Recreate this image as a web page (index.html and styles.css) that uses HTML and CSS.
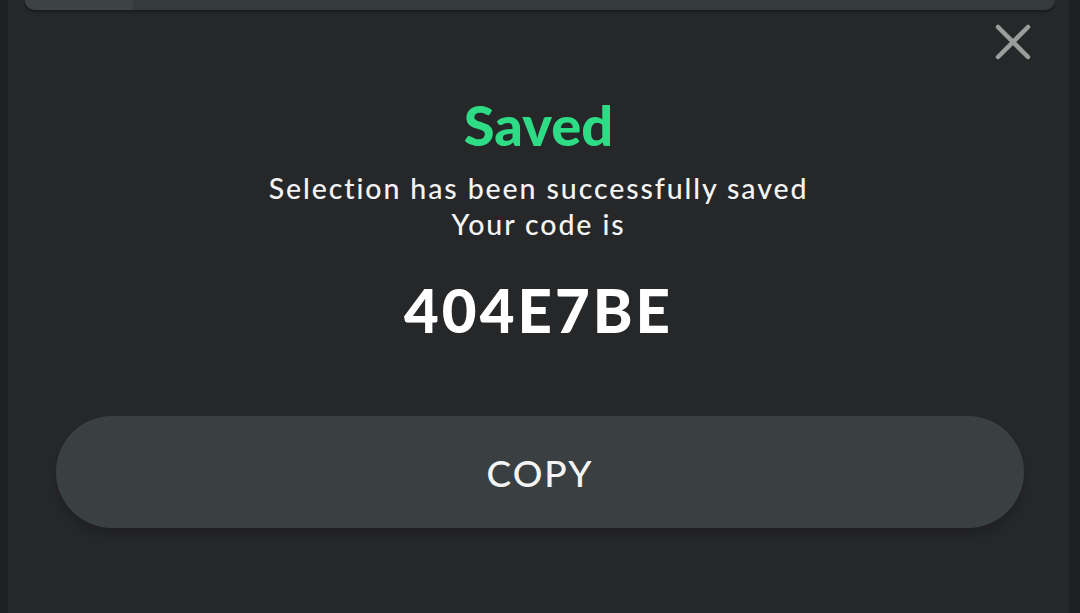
FILE: index.html
```html
<!DOCTYPE html>
<html>
<head>
<meta charset="utf-8">
<link rel="stylesheet" href="styles.css">
</head>
<body>
<div class="screen">
  <div class="sheet">
    <div class="topbar"><div class="topbar-seg"></div></div>
    <div class="close-row">
      <svg class="close" viewBox="0 0 36 36" width="36" height="36" aria-label="Close">
        <path d="M3 3 L33 33 M33 3 L3 33" stroke="#9b9c9c" stroke-width="4.5" stroke-linecap="round" fill="none"/>
      </svg>
    </div>
    <div class="content">
      <h1 class="title">Saved</h1>
      <p class="msg">Selection has been successfully saved<br>Your code is</p>
      <div class="code">404E7BE</div>
    </div>
    <div class="actions">
      <button class="copy">COPY</button>
    </div>
  </div>
</div>
</body>
</html>
```
FILE: styles.css
```css
html, body {
  margin: 0;
  padding: 0;
  background: #1f2021;
}
.screen {
  width: 1080px;
  height: 613px;
  overflow: hidden;
  background: #1f2021;
  display: flex;
}
.sheet {
  margin-left: 8px;
  width: 1061px;
  height: 613px;
  background: #262729;
  display: flex;
  flex-direction: column;
  font-family: Lato, "Noto Sans", sans-serif;
  color: #f4f4f4;
}
.topbar {
  margin: 0 14px 0 17px;
  height: 10px;
  background: #353a3b;
  border-radius: 0 0 12px 12px;
  box-shadow: 0 2px 3px rgba(0,0,0,0.35);
  display: flex;
}
.topbar-seg {
  width: 108px;
  background: #3d4243;
  border-radius: 0 0 0 12px;
}
.close-row {
  display: flex;
  justify-content: flex-end;
  padding: 14px 38px 0 0;
  height: 36px;
}
.close {
  display: block;
}
.content {
  display: flex;
  flex-direction: column;
  align-items: center;
  text-align: center;
}
.title {
  margin: 35px 0 0;
  font-size: 56px;
  line-height: 60px;
  font-weight: 900;
  color: #2ddc84;
}
.msg {
  margin: 15px 0 0;
  font-size: 28.5px;
  line-height: 36px;
  font-weight: 500;
  letter-spacing: 1.9px;
}
.code {
  margin-top: 33px;
  font-size: 60px;
  line-height: 70px;
  font-weight: 900;
  letter-spacing: 3px;
  color: #ffffff;
}
.actions {
  padding: 0 45px 0 48px;
  margin-top: 71px;
}
.copy {
  width: 100%;
  height: 112px;
  border: none;
  border-radius: 56px;
  background: #3a4041;
  color: #f4f4f4;
  font-family: Lato, "Noto Sans", sans-serif;
  font-size: 37px;
  font-weight: 500;
  letter-spacing: 2px;
  box-shadow: 0 8px 10px rgba(0,0,0,0.15);
}
```
